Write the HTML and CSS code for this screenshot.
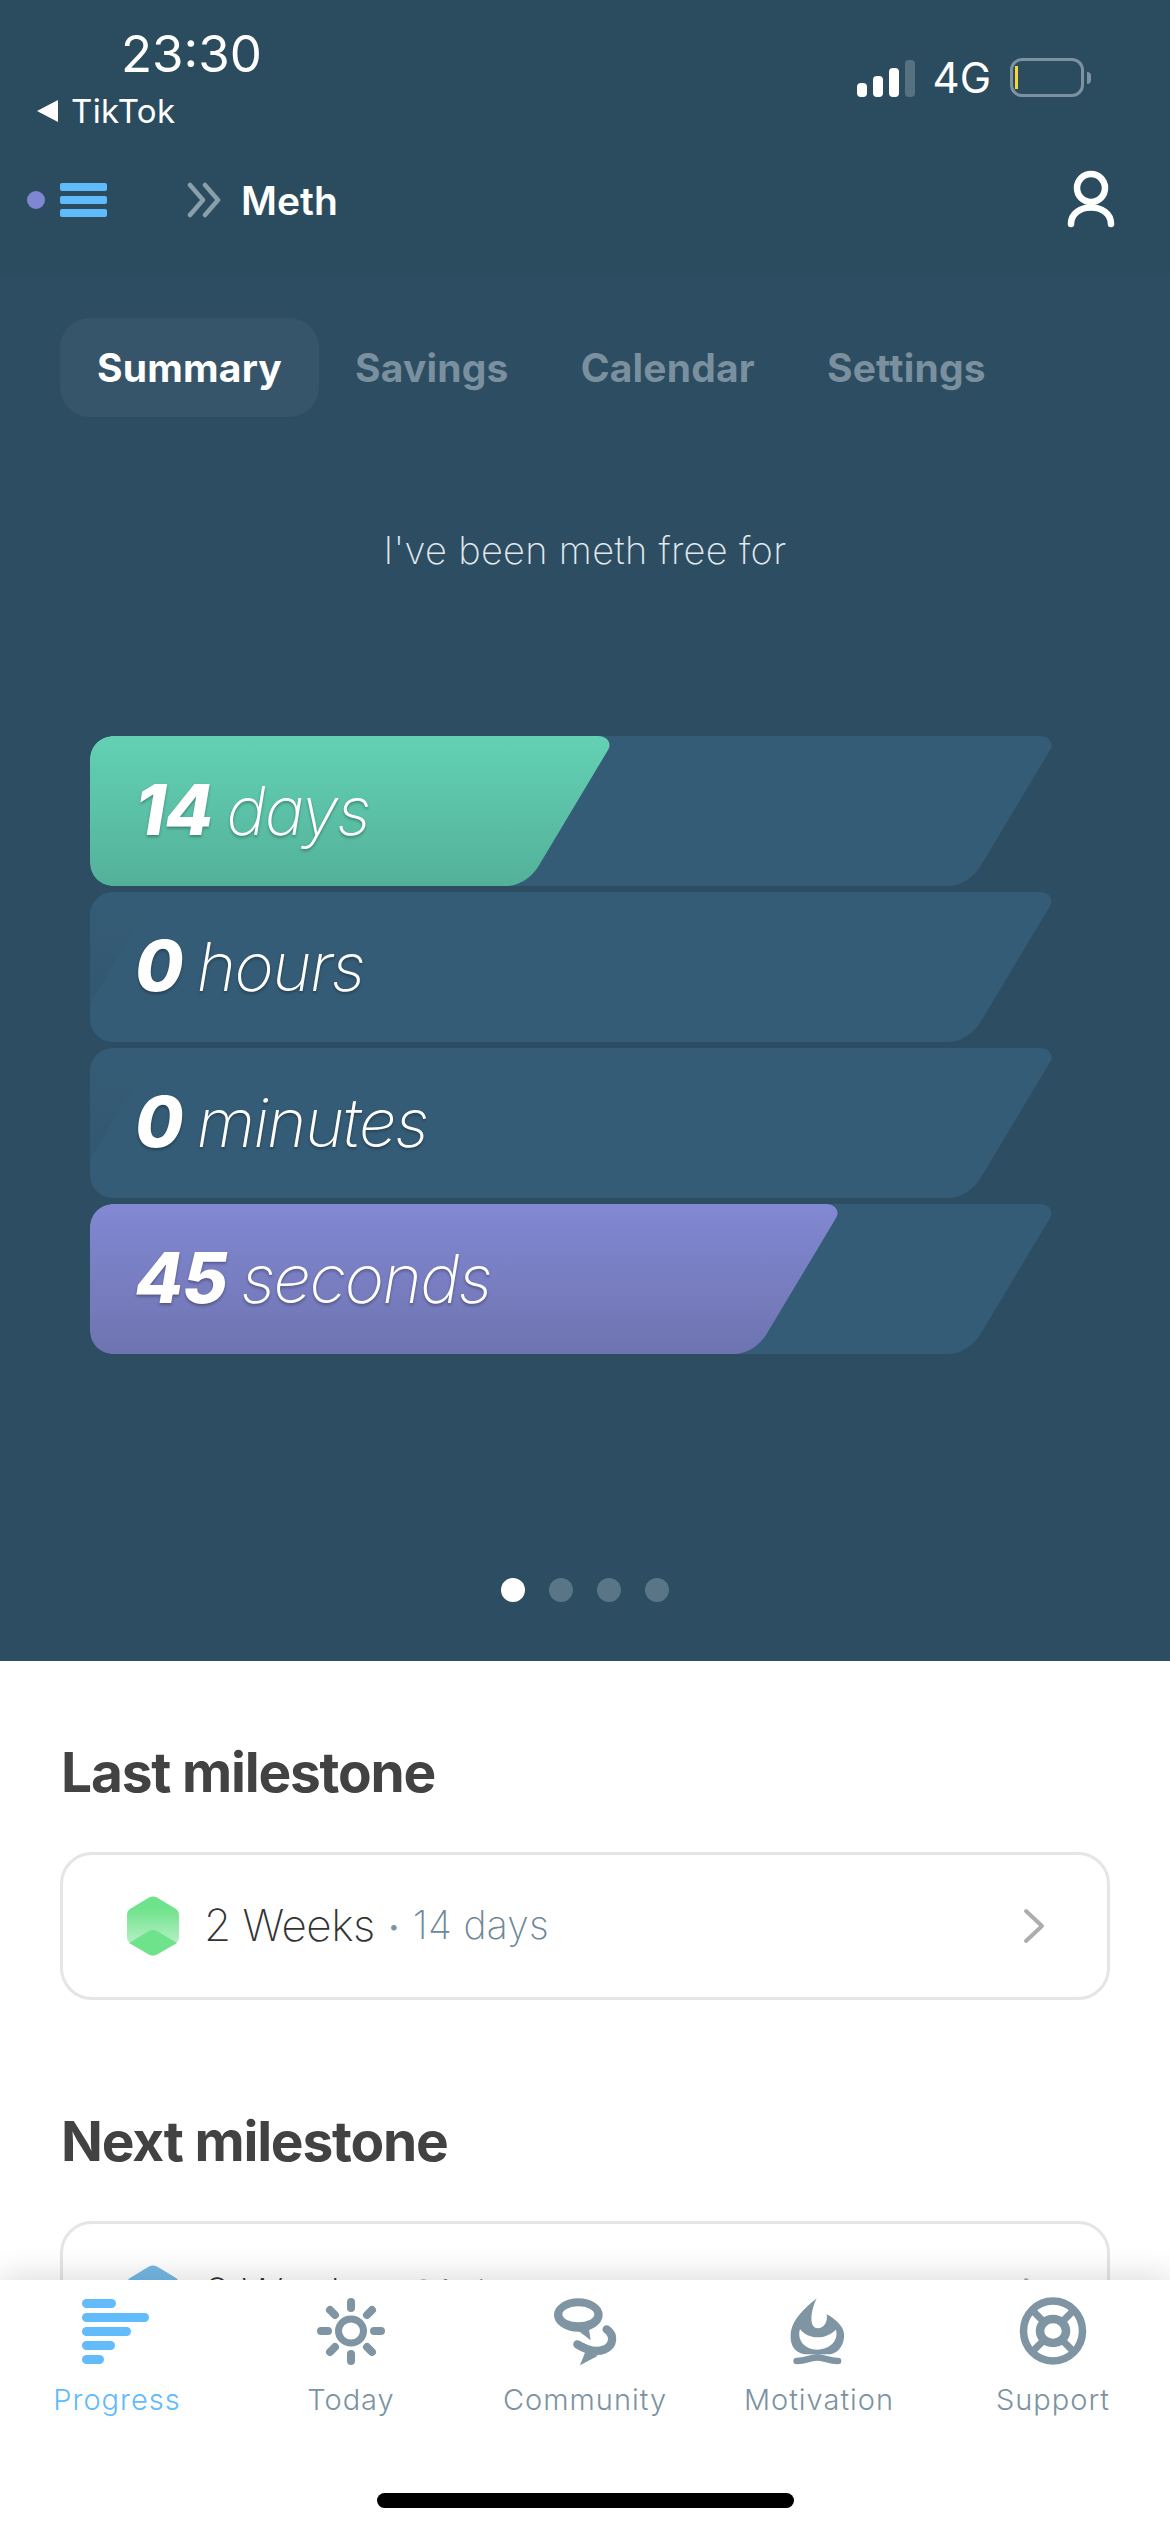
FILE: index.html

```html
<!DOCTYPE html>
<html lang="en">
<head>
    <meta charset="UTF-8">
    <meta name="viewport" content="width=device-width, initial-scale=1.0">
    <title>Meth - Summary</title>
    <link rel="stylesheet" href="styles.css">
</head>
<body>
    <div class="screen">
        <div class="scroll">
            <header class="topbar">
                <div class="status">
                    <div class="status-left">
                        <div class="time">23:30</div>
                        <div class="back"><span class="back-arrow"></span>TikTok</div>
                    </div>
                    <div class="status-right">
                        <div class="signal">
                            <span class="sig1"></span>
                            <span class="sig2"></span>
                            <span class="sig3"></span>
                            <span class="sig4"></span>
                        </div>
                        <div class="network">4G</div>
                        <div class="battery"><span class="battery-level"></span></div>
                        <span class="battery-nub"></span>
                    </div>
                </div>
                <nav class="nav">
                    <span class="nav-dot"></span>
                    <div class="burger"><span></span><span></span><span></span></div>
                    <svg class="crumb" width="34" height="36" viewBox="0 0 34 36">
                        <path d="M3 3 L16 18 L3 33 M18 3 L31 18 L18 33" fill="none" stroke="#8a9fab" stroke-width="4.5" stroke-linecap="round" stroke-linejoin="round"/>
                    </svg>
                    <div class="nav-title">Meth</div>
                    <svg class="person" width="48" height="60" viewBox="0 0 48 60">
                        <circle cx="24" cy="18" r="14" fill="none" stroke="#fff" stroke-width="6.5"/>
                        <path d="M4 54 C4 32 44 32 44 54" fill="none" stroke="#fff" stroke-width="6.5" stroke-linecap="round"/>
                    </svg>
                </nav>
            </header>

            <section class="hero">
                <div class="tabs">
                    <div class="tab active">Summary</div>
                    <div class="tab">Savings</div>
                    <div class="tab">Calendar</div>
                    <div class="tab">Settings</div>
                </div>
                <p class="subtitle">I've been meth free for</p>
                <div class="bars">
                    <div class="bar">
                        <div class="fill fill-days"></div>
                        <div class="bar-label"><b>14</b> days</div>
                    </div>
                    <div class="bar">
                        <div class="fill fill-empty"></div>
                        <div class="bar-label"><b>0</b> hours</div>
                    </div>
                    <div class="bar">
                        <div class="fill fill-empty"></div>
                        <div class="bar-label"><b>0</b> minutes</div>
                    </div>
                    <div class="bar">
                        <div class="fill fill-seconds"></div>
                        <div class="bar-label"><b>45</b> seconds</div>
                    </div>
                </div>
                <div class="pager">
                    <span class="on"></span><span></span><span></span><span></span>
                </div>
            </section>

            <section class="milestones">
                <h2>Last milestone</h2>
                <div class="card">
                    <svg class="hex" width="52" height="60" viewBox="0 0 52 60">
                        <defs>
                            <linearGradient id="fadeGreen" x1="0" y1="0" x2="0" y2="1">
                                <stop offset="0.2" stop-color="#6ee38b"/>
                                <stop offset="0.85" stop-color="#bdf0cb"/>
                            </linearGradient>
                        </defs>
                        <path d="M22 1.5 Q26 -0.5 30 1.5 L49 13 Q52 15 52 19 V41 Q52 45 49 47 L30 58.5 Q26 60.5 22 58.5 L3 47 Q0 45 0 41 V19 Q0 15 3 13 Z" fill="url(#fadeGreen)"/>
                        <path d="M22 35 Q26 33 30 35 L50 47 L30 58.5 Q26 60.5 22 58.5 L2 47 Z" fill="#6ee38b"/>
                    </svg>
                    <div class="card-title">2 Weeks</div>
                    <div class="card-sep">•</div>
                    <div class="card-days">14 days</div>
                    <svg class="card-arrow" width="24" height="36" viewBox="0 0 24 36">
                        <path d="M4 3 L20 18 L4 33" fill="none" stroke="#adadad" stroke-width="4" stroke-linecap="round" stroke-linejoin="round"/>
                    </svg>
                </div>
                <h2 class="next">Next milestone</h2>
                <div class="card">
                    <svg class="hex" width="52" height="60" viewBox="0 0 52 60">
                        <path d="M22 1.5 Q26 -0.5 30 1.5 L49 13 Q52 15 52 19 V41 Q52 45 49 47 L30 58.5 Q26 60.5 22 58.5 L3 47 Q0 45 0 41 V19 Q0 15 3 13 Z" fill="#74b9e6"/>
                    </svg>
                    <div class="card-title">3 Weeks</div>
                    <div class="card-sep">•</div>
                    <div class="card-days">21 days</div>
                    <svg class="card-arrow" width="24" height="36" viewBox="0 0 24 36">
                        <path d="M4 3 L20 18 L4 33" fill="none" stroke="#adadad" stroke-width="4" stroke-linecap="round" stroke-linejoin="round"/>
                    </svg>
                </div>
            </section>
        </div>

        <footer class="tabbar">
            <div class="tabbar-items">
                <div class="item current">
                    <svg width="90" height="90" viewBox="0 0 90 90" fill="#62bcfb">
                        <rect x="10" y="14" width="34" height="9" rx="4.5"/>
                        <rect x="10" y="28" width="67" height="9" rx="4.5"/>
                        <rect x="10" y="42" width="49" height="9" rx="4.5"/>
                        <rect x="10" y="56" width="33" height="9" rx="4.5"/>
                        <rect x="10" y="70" width="22" height="9" rx="4.5"/>
                    </svg>
                    <span>Progress</span>
                </div>
                <div class="item">
                    <svg width="90" height="90" viewBox="0 0 90 90" fill="none" stroke="#7f95a3">
                        <ellipse cx="45" cy="46" rx="12.5" ry="12" stroke-width="7"/>
                        <path d="M45 17 V23 M45 69 V76 M15 46 H22 M68 46 H75 M24 25 L29 30 M66 25 L61 30 M24 67 L29 62 M66 67 L61 62" stroke-width="8" stroke-linecap="round"/>
                    </svg>
                    <span>Today</span>
                </div>
                <div class="item">
                    <svg width="90" height="90" viewBox="0 0 270 270">
                        <path fill="#7f95a3" fill-rule="evenodd" d="M42 90 A73 50 0 1 1 188 90 A73 50 0 1 1 42 90 Z M67 88 A48 24 0 1 0 163 88 A48 24 0 1 0 67 88 Z"/>
                        <path fill="#7f95a3" d="M108 132 L152 166 L146 126 Z"/>
                        <path fill="none" stroke="#7f95a3" stroke-width="25" stroke-linecap="round" d="M200 133 C224 150 222 182 192 194 C168 203 138 194 112 178"/>
                        <path fill="#7f95a3" d="M136 200 L120 241 L174 212 Z"/>
                    </svg>
                    <span>Community</span>
                </div>
                <div class="item">
                    <svg width="90" height="90" viewBox="0 0 270 270">
                        <path fill="#7f95a3" fill-rule="evenodd" d="M128 40 C92 70 52 105 50 150 C48 180 62 202 90 208 H170 C196 202 212 176 210 146 C208 124 185 102 158 88 C162 110 150 130 132 130 C108 130 105 90 128 40 Z M78 132 C100 162 150 168 186 134 C194 165 170 192 130 194 C92 194 68 165 78 132 Z"/>
                        <path fill="none" stroke="#7f95a3" stroke-width="20" stroke-linecap="round" d="M68 228 C95 228 112 217 130 217 C148 217 165 228 192 228"/>
                    </svg>
                    <span>Motivation</span>
                </div>
                <div class="item">
                    <svg width="90" height="90" viewBox="0 0 90 90" fill="none" stroke="#7f95a3">
                        <ellipse cx="45" cy="46" rx="29.5" ry="30" stroke-width="7.5"/>
                        <ellipse cx="45" cy="46" rx="13" ry="12" stroke-width="8.5"/>
                        <path d="M24 25 L35 36 M66 25 L55 36 M24 67 L35 56 M66 67 L55 56" stroke-width="7"/>
                    </svg>
                    <span>Support</span>
                </div>
            </div>
            <div class="home-bar"></div>
        </footer>
    </div>
</body>
</html>
```

FILE: styles.css

```css
* {
    box-sizing: border-box;
}
html, body {
    margin: 0;
    padding: 0;
    background-color: white;
}
body {
    font-family: Inter, "Noto Sans", sans-serif;
}
.screen {
    width: 1170px;
    height: 2532px;
    display: flex;
    flex-direction: column;
    overflow: hidden;
}
.scroll {
    flex: 1;
    min-height: 0;
    overflow: hidden;
}

/* top of the app */
.topbar {
    height: 273px;
    background-color: #2b4c5f;
    color: white;
}
.status {
    height: 140px;
    display: flex;
    justify-content: space-between;
}
.status-left {
    padding: 29px 0 0 37px;
}
.time {
    margin-left: 84px;
    font-size: 51px;
    line-height: 50px;
}
.back {
    margin-top: 14px;
    display: flex;
    align-items: center;
    font-size: 33px;
    letter-spacing: 0.4px;
    line-height: 36px;
}
.back-arrow {
    width: 0;
    height: 0;
    margin-right: 13px;
    border-top: 11px solid transparent;
    border-bottom: 11px solid transparent;
    border-right: 21px solid white;
}
.status-right {
    height: 39px;
    margin-top: 58px;
    padding-right: 79px;
    display: flex;
    align-items: center;
}
.signal {
    display: flex;
    align-items: flex-end;
    gap: 6px;
    height: 37px;
    margin-top: 2px;
}
.signal span {
    width: 10px;
    border-radius: 4px;
    background-color: white;
}
.signal .sig1 { height: 14px; }
.signal .sig2 { height: 21px; }
.signal .sig3 { height: 29px; }
.signal .sig4 { height: 37px; background-color: #56717f; }
.network {
    margin-left: 18px;
    font-size: 42px;
    line-height: 39px;
}
.battery {
    width: 74px;
    height: 39px;
    margin-left: 19px;
    padding: 5px 2px;
    border: 3px solid #7c92a0;
    border-radius: 12px;
}
.battery-level {
    display: block;
    width: 3px;
    height: 100%;
    background-color: #f7d33c;
}
.battery-nub {
    width: 4px;
    height: 12px;
    margin-left: 3px;
    border-radius: 0 4px 4px 0;
    background-color: #7c92a0;
}
.nav {
    height: 133px;
    padding: 0 55px 13px 27px;
    display: flex;
    align-items: center;
}
.nav-dot {
    width: 18px;
    height: 18px;
    border-radius: 50%;
    background-color: #8087d2;
}
.burger {
    margin-left: 15px;
    width: 47px;
    display: flex;
    flex-direction: column;
    gap: 5px;
}
.burger span {
    height: 8px;
    border-radius: 2px;
    background-color: #5fbbfb;
}
.crumb {
    margin-left: 80px;
}
.nav-title {
    margin-left: 20px;
    font-size: 39px;
    font-weight: 600;
    flex: 1;
}

/* counters */
.hero {
    height: 1388px;
    padding-top: 45px;
    background-color: #2c4d62;
}
.tabs {
    display: flex;
    padding-left: 60px;
}
.tab {
    height: 99px;
    padding: 0 36px;
    border-radius: 30px;
    font-size: 39px;
    font-weight: 700;
    letter-spacing: 0.2px;
    line-height: 99px;
    color: #7a909e;
}
.tab.active {
    padding: 0 37px;
    background-color: #36556a;
    color: white;
}
.subtitle {
    margin: 111px 0 0;
    text-align: center;
    font-size: 38px;
    font-weight: 200;
    letter-spacing: 0.3px;
    line-height: 44px;
    color: #e2e8ec;
}
.bars {
    margin: 164px 0 0 90px;
    display: flex;
    flex-direction: column;
    gap: 6px;
}
.bar {
    position: relative;
    width: 970px;
    height: 150px;
    padding: 0 0 3px 45px;
    display: flex;
    align-items: center;
    background-color: #355c76;
    clip-path: path("M24 0H950C960 0 964 8 960 14L890 131C882 143 870 150 858 150H24C10 150 0 140 0 126V24C0 10 10 0 24 0Z");
}
.fill {
    position: absolute;
    top: 0;
    right: 0;
    bottom: 0;
    left: 0;
}
.fill-days {
    background: linear-gradient(#63d1b4, #53b19a);
    clip-path: path("M24 0H508C518 0 522 8 518 14L448 131C440 143 428 150 416 150H24C10 150 0 140 0 126V24C0 10 10 0 24 0Z");
}
.fill-seconds {
    background: linear-gradient(#8288d2, #6e74b0);
    clip-path: path("M24 0H736C746 0 750 8 746 14L676 131C668 143 656 150 644 150H24C10 150 0 140 0 126V24C0 10 10 0 24 0Z");
}
.fill-empty {
    background: linear-gradient(rgba(44, 77, 98, 0), rgba(44, 77, 98, 0.35));
    clip-path: polygon(0 0, 66px 0, 0 113px);
}
.bar-label {
    position: relative;
    font-size: 67px;
    font-style: italic;
    font-weight: 200;
    letter-spacing: -1.5px;
    word-spacing: -3px;
    color: white;
    text-shadow: 0 2px 3px rgba(0, 0, 0, 0.3);
}
.bar-label b {
    font-size: 70px;
    font-weight: 800;
    letter-spacing: -1px;
}
.pager {
    margin-top: 224px;
    display: flex;
    justify-content: center;
    gap: 24px;
}
.pager span {
    width: 24px;
    height: 24px;
    border-radius: 50%;
    background-color: #587686;
}
.pager .on {
    background-color: white;
}

/* milestone cards */
.milestones {
    padding: 81px 60px 0;
}
h2 {
    margin: 0 0 50px 1px;
    font-size: 55px;
    font-weight: 700;
    line-height: 60px;
    letter-spacing: -1.2px;
    color: #424242;
}
h2.next {
    margin-top: 111px;
}
.card {
    height: 148px;
    padding: 0 61px 0 64px;
    display: flex;
    align-items: center;
    border: 3px solid #e5e5e5;
    border-radius: 32px;
    background-color: white;
}
.card-title {
    margin: 0 0 3px 25px;
    font-size: 44px;
    font-weight: 200;
    letter-spacing: -0.5px;
    color: #333;
}
.card-sep {
    margin-left: 14px;
    font-size: 18px;
    color: #7b95a5;
}
.card-days {
    margin: 0 0 3px 14px;
    font-size: 39px;
    font-weight: 200;
    letter-spacing: 0.3px;
    color: #6c8899;
}
.card-arrow {
    margin-left: auto;
}

/* bottom tabs */
.tabbar {
    position: relative;
    flex: none;
    height: 252px;
    padding-top: 5px;
    background-color: white;
    box-shadow: 0 -4px 30px rgba(0, 0, 0, 0.14);
}
.tabbar-items {
    display: grid;
    grid-template-columns: repeat(5, 1fr);
}
.item {
    display: flex;
    flex-direction: column;
    align-items: center;
    font-size: 29px;
    font-weight: 300;
    letter-spacing: 1px;
    color: #7c93a2;
}
.item svg {
    display: block;
}
.item span {
    margin-top: 7px;
    line-height: 36px;
}
.item.current {
    color: #5fbbfb;
}
.home-bar {
    position: absolute;
    left: 377px;
    bottom: 24px;
    width: 417px;
    height: 15px;
    border-radius: 8px;
    background-color: black;
}
```
